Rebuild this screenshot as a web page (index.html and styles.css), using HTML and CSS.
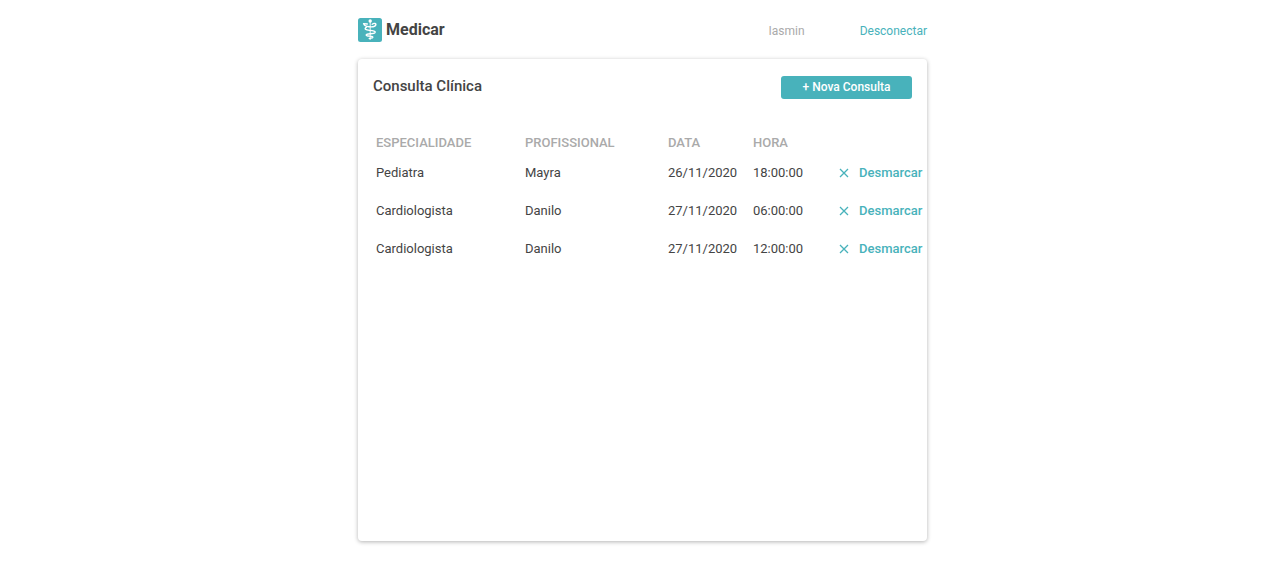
FILE: index.html
```html
<!DOCTYPE html>
<html lang="pt-BR">
<head>
<meta charset="utf-8">
<meta name="viewport" content="width=device-width, initial-scale=1">
<title>Medicar</title>
<link rel="stylesheet" href="styles.css">
</head>
<body>
<div class="page">
  <header class="topbar">
    <div class="brand">
      <svg class="logo" viewBox="0 0 24 24" aria-hidden="true">
        <rect width="24" height="24" rx="2.5" fill="#48b2bb"/>
        <g fill="none" stroke="#fff" stroke-linecap="round" stroke-linejoin="round">
          <path d="M12.2 4V21.500" stroke-width="0.900"/>
          <path d="M14.200 6.200C16 4.800 18.400 5.400 17.800 7C17.200 8.700 14 9 11 8.700C8 8.400 6.200 7.400 5.600 5.600L9.300 6" stroke-width="1.400"/>
          <path d="M8.500 9.200C5.800 10.800 7.500 12.200 11.500 12.400C15.500 12.600 17.800 13.200 17 14.700C16 16.400 8.800 15.200 8.200 17C7.800 18.600 15 17.600 14.800 19.200C14.500 20.200 12.800 20 11.200 20.600" stroke-width="1.400"/>
        </g>
        <circle cx="12.200" cy="3" r="1.700" fill="#fff"/>
      </svg>
      <span class="brand-name">Medicar</span>
    </div>
    <nav class="account">
      <span class="user">Iasmin</span>
      <a class="logout" href="#">Desconectar</a>
    </nav>
  </header>
  <main class="card">
    <div class="card-head">
      <h1 class="title">Consulta Clínica</h1>
      <button class="new" type="button">+ Nova Consulta</button>
    </div>
    <table class="list">
      <colgroup><col class="c-spec"><col class="c-prof"><col class="c-date"><col class="c-time"><col></colgroup>
      <thead>
        <tr><th scope="col">ESPECIALIDADE</th><th scope="col">PROFISSIONAL</th><th scope="col">DATA</th><th scope="col">HORA</th><td></td></tr>
      </thead>
      <tbody>
        <tr><td>Pediatra</td><td>Mayra</td><td>26/11/2020</td><td>18:00:00</td><td><button class="cancel" type="button"><svg class="x" viewBox="0 0 10 10" aria-hidden="true"><path d="M1 1L9 9M9 1L1 9"/></svg>Desmarcar</button></td></tr>
        <tr><td>Cardiologista</td><td>Danilo</td><td>27/11/2020</td><td>06:00:00</td><td><button class="cancel" type="button"><svg class="x" viewBox="0 0 10 10" aria-hidden="true"><path d="M1 1L9 9M9 1L1 9"/></svg>Desmarcar</button></td></tr>
        <tr><td>Cardiologista</td><td>Danilo</td><td>27/11/2020</td><td>12:00:00</td><td><button class="cancel" type="button"><svg class="x" viewBox="0 0 10 10" aria-hidden="true"><path d="M1 1L9 9M9 1L1 9"/></svg>Desmarcar</button></td></tr>
      </tbody>
    </table>
  </main>
</div>
</body>
</html>
```
FILE: styles.css
```css
* { box-sizing: border-box; }
body {
  margin: 0;
  padding-left: 5px;
  background: #fff;
  color: #444;
  font: 13px/20px Roboto, sans-serif;
}
.page {
  display: flex;
  flex-direction: column;
  max-width: 569px;
  min-height: 100vh;
  margin: 0 auto;
  padding-bottom: 20px;
}
.topbar {
  display: flex;
  align-items: center;
  justify-content: space-between;
  height: 59px;
}
.brand { display: flex; align-items: center; gap: 4px; }
.logo { width: 24px; height: 24px; }
.brand-name { font-size: 16px; font-weight: 700; }
.account { display: flex; gap: 55px; padding-top: 3px; font-size: 12px; }
.user { color: #aaa; }
.logout { color: #48b2bb; text-decoration: none; }
.card {
  flex: 1;
  border-radius: 4px;
  background: #fff;
  box-shadow: 0 1px 4px rgba(0, 0, 0, .3);
}
.card-head {
  display: flex;
  align-items: flex-start;
  justify-content: space-between;
  padding: 17px 15px 0;
}
.title { margin: 0; font-size: 15px; line-height: 20px; font-weight: 500; }
.new {
  width: 131px;
  height: 23px;
  padding: 0;
  border: 0;
  border-radius: 3px;
  background: #48b2bb;
  color: #fff;
  font: 500 12px/23px Roboto, sans-serif;
}
.list {
  width: 100%;
  margin-top: 33px;
  border-collapse: collapse;
  table-layout: fixed;
}
.list th, .list td { padding: 0; text-align: left; }
.list th:first-child, .list td:first-child { padding-left: 18px; }
.list th { height: 22px; color: #aaa; font-weight: 500; }
.list tbody td { height: 38px; }
.c-spec { width: 167px; }
.c-prof { width: 143px; }
.c-date { width: 85px; }
.c-time { width: 86px; }
.cancel {
  display: flex;
  align-items: center;
  gap: 10px;
  padding: 0;
  border: 0;
  background: none;
  color: #48b2bb;
  font: 500 13px/20px Roboto, sans-serif;
}
.x { width: 10px; height: 10px; fill: none; stroke: currentColor; stroke-width: 1.3; }
```
